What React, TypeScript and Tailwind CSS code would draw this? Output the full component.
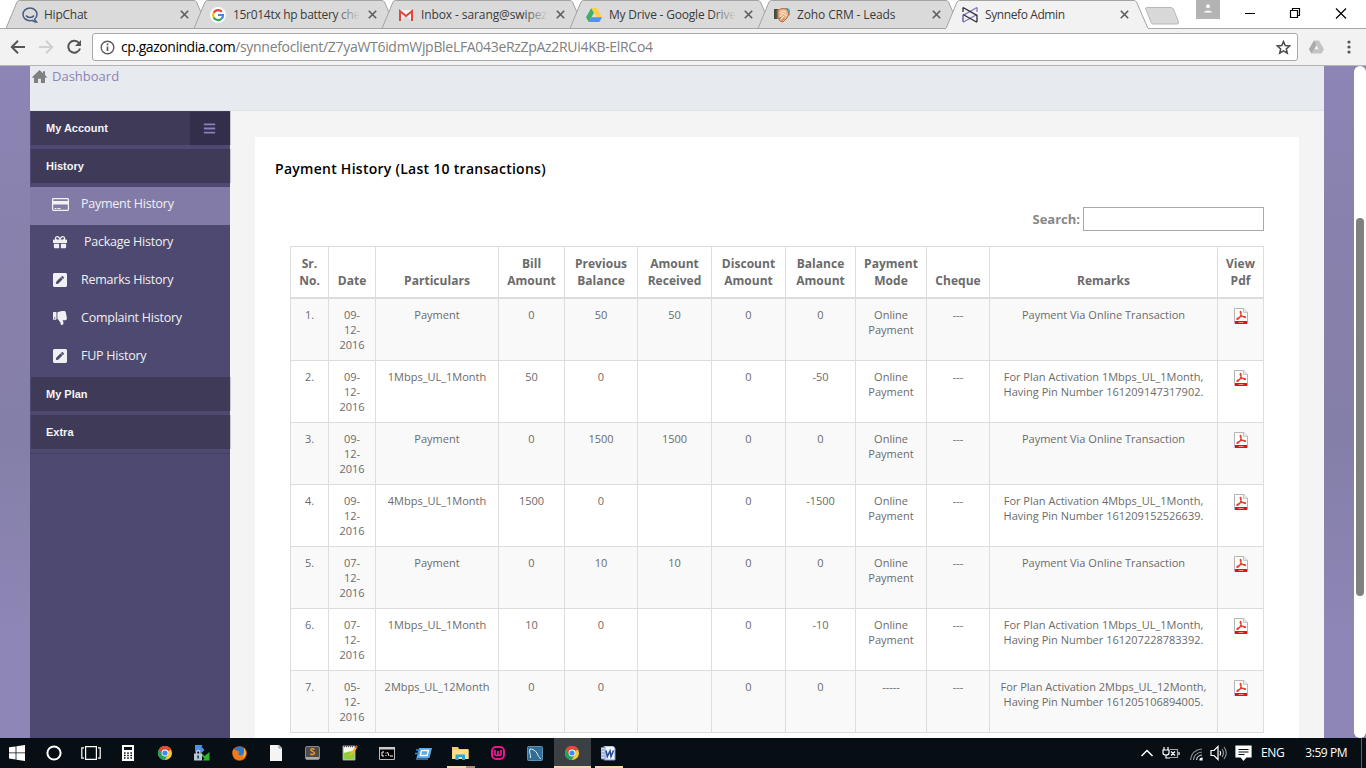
import type { ReactNode } from "react";
import { FaBars, FaGift, FaPenSquare, FaThumbsDown } from "react-icons/fa";

const SANS = "font-['Open_Sans','Noto_Sans',sans-serif]";

/* ---------- small drawings ---------- */

function ChromeIcon() {
  return (
    <svg width="14" height="14" viewBox="0 0 14 14">
      <circle cx="7" cy="7" r="7" fill="#fcc934" />
      <path d="M7 7 0.9 3.5A7 7 0 0 1 13.1 3.5Z" fill="#e04a3a" />
      <path d="M7 7 0.9 3.5A7 7 0 0 0 6.6 14L10 8.7Z" fill="#1da261" />
      <path d="M7 3.8H13.3A7 7 0 0 0 .9 3.5L4 8.2Z" fill="#e04a3a" />
      <circle cx="7" cy="7" r="3.4" fill="#fff" />
      <circle cx="7" cy="7" r="2.6" fill="#4285f4" />
    </svg>
  );
}

function HipChatIcon() {
  return (
    <svg width="16" height="16" viewBox="0 0 16 16" fill="none" stroke="#4a5a80" strokeWidth="1.5">
      <path d="M12.6 12.2C14 11 15 9.4 15 7.4 15 3.8 11.9 1 8 1S1 3.8 1 7.4s3.100 6.300 7 6.300c.8 0 1.600-.1 2.300-.3 1.200 1 2.600 1.700 4.100 1.500-.9-.8-1.500-1.700-1.800-2.700Z" />
      <path d="M4 8.500c1.700 2.600 6.300 2.600 8 0" />
    </svg>
  );
}

function GoogleIcon() {
  return (
    <svg width="16" height="16" viewBox="0 0 16 16">
      <circle cx="8" cy="8" r="8" fill="#fff" />
      <g fill="none" strokeWidth="2.200">
        <path d="M11.800 4.700A5 5 0 0 0 3.700 5.700" stroke="#ea4335" />
        <path d="M3.700 5.700a5 5 0 0 0 0 4.700" stroke="#fbbc05" />
        <path d="M3.700 10.400a5 5 0 0 0 7.800 1.400" stroke="#34a853" />
        <path d="M8 8h5c0 1.600-.5 2.900-1.500 3.800" stroke="#4285f4" />
      </g>
    </svg>
  );
}

function GmailIcon() {
  return (
    <svg width="16" height="14" viewBox="0 0 16 14" className="mt-px">
      <path d="M2 2h12v11H2z" fill="#f2f2f2" />
      <path d="M2 13 8 7l6 6Z" fill="#dcdcdc" />
      <path d="M2 13V3.200L8 8l6-4.800V13" fill="none" stroke="#dc4a3d" strokeWidth="2" />
    </svg>
  );
}

function DriveIcon() {
  return (
    <svg width="16" height="14" viewBox="0 0 16 14">
      <path d="M5.300 0 0 9.300 2.700 14 8 4.700Z" fill="#3fae6a" />
      <path d="M5.300 0h5.400L16 9.300h-5.300Z" fill="#ffcf4a" />
      <path d="M5.300 9.300H16L13.300 14H2.700Z" fill="#5390f0" />
    </svg>
  );
}

function ZohoIcon() {
  return (
    <svg width="16" height="16" viewBox="0 0 16 16">
      <path d="M0 2h4v10H0z" fill="#4a4a3e" />
      <path d="M2.800 3h1.700v9H2.800z" fill="#60a050" />
      <path d="M11 1h3l2 2v5l-3 1z" fill="#3bb9dc" />
      <path d="M4 3 8 1.500 13 2l2 5-2 4-4 4-3-1-2-3Z" fill="#e9b68c" stroke="#a8562e" strokeWidth=".8" />
      <path d="m6 10 3-4 4 3M6 6l3-2 3 1M7 12l3-3" fill="none" stroke="#fff0da" strokeWidth="1" />
      <path d="m5 12 2-2M8 13.500l2-2" stroke="#b45a28" />
    </svg>
  );
}

function SynnefoIcon() {
  return (
    <svg width="16" height="16" viewBox="0 0 16 16" fill="none" strokeWidth="1.300">
      <path d="M15 .5 1 8.500V15M15 .5V5M15 7.500 1 15.200" stroke="#8379bc" />
      <path d="M1 .5 15 8.500V15M1 .5V5M1 7.500l14 7.700" stroke="#2d2d3c" />
      <path d="M1 8.500V15" stroke="#8379bc" />
    </svg>
  );
}

function PdfIcon() {
  return (
    <svg width="14" height="16" viewBox="0 0 14 16">
      <path d="M.5.5h9.200l3.800 3.600v11.400H.5Z" fill="#fff" stroke="#b4b4b4" />
      <path d="M9.500.5v3.800h4" fill="#eee" stroke="#b4b4b4" strokeWidth=".8" />
      <path d="M6.300 3.400c1.300-.1.800 2.800.1 4.700C5.500 10 3.800 11.800 3 11.500c-1-.8 3-2.800 5.200-3.100 1.600-.2 3.600.1 3.400.9-.3.800-2.500-.2-3.800-1.600C6.600 6.400 5.700 4 6.300 3.400Z" fill="none" stroke="#e8402c" strokeWidth="1.100" />
      <path d="M1 13h12v3H1z" fill="#ee0d0d" />
      <path d="M4.500 14.500h5" stroke="#f98a8a" strokeWidth="1" />
    </svg>
  );
}

/* ---------- browser chrome ---------- */

interface Tab {
  title: string;
  icon: ReactNode;
  fade: boolean;
  text: string;
}

const tabs: Tab[] = [
  { title: "HipChat", icon: <HipChatIcon />, fade: false, text: "ml-[6px] w-[128px] tracking-[-0.25px]" },
  { title: "15r014tx hp battery check", icon: <GoogleIcon />, fade: true, text: "ml-[7px] w-[127px] tracking-[-0.3px]" },
  { title: "Inbox - sarang@swipez.in", icon: <GmailIcon />, fade: true, text: "ml-[7px] w-[127px] tracking-[-0.1px]" },
  { title: "My Drive - Google Drive", icon: <DriveIcon />, fade: true, text: "ml-[7px] w-[127px] tracking-[-0.2px]" },
  { title: "Zoho CRM - Leads", icon: <ZohoIcon />, fade: false, text: "ml-[7px] w-[127px] tracking-[-0.12px]" },
  { title: "Synnefo Admin", icon: <SynnefoIcon />, fade: false, text: "ml-[7px] w-[127px] tracking-[-0.4px]" },
];

function TabItem({ tab, active }: { tab: Tab; active: boolean }) {
  return (
    <div className="relative flex h-[29px] w-[188px] shrink-0 items-center pl-4">
      <svg className="absolute left-0 top-0" width="204" height="29" viewBox="0 0 204 29" overflow="visible">
        <path
          d="M0 28.500 11 2Q12 .5 13.500 .5H188Q189.500 .5 190.500 2L202 28.500"
          fill={active ? "#f2f2f2" : "#dadada"}
          stroke="#a3a3a3"
        />
        <path d="M0 28.500H202" stroke={active ? "#f2f2f2" : "#a3a3a3"} />
      </svg>
      <span className="relative flex h-4 w-4 items-center justify-center">{tab.icon}</span>
      <span className={"relative shrink-0 overflow-hidden whitespace-nowrap text-[12px] text-[#3a3a3a] " + tab.text}>
        {tab.title}
        {tab.fade && <span className="absolute right-0 top-0 h-full w-6 bg-gradient-to-r from-transparent to-[#dadada]" />}
      </span>
      <svg className="relative ml-[8px] shrink-0" width="9" height="9" viewBox="0 0 9 9" stroke="#5c5c5c" strokeWidth="1.600">
        <path d="m.8.800 7.400 7.400M8.200.800.800 8.200" />
      </svg>
    </div>
  );
}

function TabStrip() {
  return (
    <div className="flex h-[29px] border-b border-[#a9a9a9] bg-white pl-[6px]">
      {tabs.map((t, i) => (
        <TabItem key={t.title} tab={t} active={i === 5} />
      ))}
      <svg className="ml-[11px] mt-[7px] shrink-0" width="35" height="18" viewBox="0 0 35 18">
        <path d="M1.500 .5H26Q27.500 .5 28.500 2L33.500 15Q34 17 32 17H8Q6.500 17 6 15.500L.8 2Q.4 .5 1.500 .5Z" fill="#d8d8d8" stroke="#b8b8b8" />
      </svg>
      <div className="ml-[16px] flex h-[19px] w-[24px] shrink-0 justify-center bg-[#b3b3b3] pt-1">
        <svg width="10" height="10" viewBox="0 0 10 10" fill="#fff">
          <circle cx="5" cy="2.200" r="2" />
          <path d="M1 8.500C1 6 9 6 9 8.500Z" />
        </svg>
      </div>
      <svg className="ml-[24px] mt-[7px] shrink-0" width="104" height="13" viewBox="0 0 104 13" fill="none" stroke="#000">
        <path d="M1 6.500h10" />
        <path d="M46.500 3.500h7v7h-7zM48.500 3.500v-2h7v7h-2" strokeWidth="1.200" />
        <path d="m92 1.500 10 10M102 1.500l-10 10" strokeWidth="1.200" />
      </svg>
    </div>
  );
}

function Toolbar() {
  return (
    <div className="flex h-[37px] items-center border-b border-[#b5b5b5] bg-[#f2f2f2]">
      <svg className="ml-[10px]" width="74" height="16" viewBox="0 0 74 16" fill="none" strokeWidth="2">
        <path d="M15 8H2.500M8 1.800 1.800 8 8 14.200" stroke="#555" />
        <path d="M29 8h12.500M36 1.800 42.200 8 36 14.200" stroke="#d0d0d0" />
        <path d="M69 4A6 6 0 1 0 70 9.500" stroke="#555" />
        <path d="M71 1v6h-6Z" fill="#555" />
      </svg>
      <div className="ml-2 flex h-[28px] w-[1206px] items-center rounded-[3px] border border-[#a9a9a9] bg-white pl-[7px] pr-[6px]">
        <svg width="15" height="15" viewBox="0 0 15 15" fill="none" stroke="#5a5a5a">
          <circle cx="7.500" cy="7.500" r="6.300" strokeWidth="1.400" />
          <path d="M7.500 6.500v4.500M7.500 3.600v1.700" strokeWidth="1.700" />
        </svg>
        <span className="ml-[6px] whitespace-nowrap pb-px text-[14px] tracking-[-0.44px] text-[#808080]">
          <span className="text-black">cp.gazonindia.com</span>
          <span className="tracking-[-0.31px]">/synnefoclient/Z7yaWT6idmWjpBleLFA043eRzZpAz2RUi4KB-ElRCo4</span>
        </span>
        <svg className="ml-auto" width="15" height="15" viewBox="0 0 15 15" fill="none" stroke="#4a4a4a" strokeWidth="1.500">
          <path d="m7.500 1.600 1.700 4 4.400.4-3.300 2.900 1 4.300-3.800-2.300-3.800 2.300 1-4.300L1.400 6l4.400-.4Z" />
        </svg>
      </div>
      <svg className="ml-[11px]" width="15" height="14" viewBox="0 0 16 14">
        <path d="M5.300 0h5.400L16 9.300 13.300 14H2.700L0 9.300Z" fill="#c4c4c4" />
        <path d="M5.300 0 0 9.300 2.700 14 8 4.700Z" fill="#ababab" />
        <path d="m8 5 2.200 4.300H5.800Z" fill="#f2f2f2" />
      </svg>
      <svg className="ml-[23px]" width="4" height="14" viewBox="0 0 4 14" fill="#555">
        <circle cx="2" cy="2" r="1.600" />
        <circle cx="2" cy="7" r="1.600" />
        <circle cx="2" cy="12" r="1.600" />
      </svg>
    </div>
  );
}

/* ---------- sidebar ---------- */

function Section({ title, children }: { title: string; children?: ReactNode }) {
  return (
    <div className="mb-1 ml-px flex h-[34px] w-[200px] justify-between bg-[linear-gradient(90deg,#3f3a58_199px,#cbc9cf_199px)] font-['Liberation_Sans',Arial,sans-serif] text-[11px] font-bold leading-[34px] text-[#f4f4f4]">
      <span className="pl-[15px]">{title}</span>
      {children}
    </div>
  );
}

function CardIcon() {
  return (
    <svg width="17" height="13" viewBox="0 0 17 13">
      <rect x=".6" y=".6" width="15.800" height="11.800" rx=".8" fill="none" stroke="#f2f2f2" strokeWidth="1.200" />
      <path d="M1 3h15v3.500H1z" fill="#f2f2f2" />
      <path d="M2.500 10.500h2M5.500 10.500h3" stroke="#f2f2f2" />
    </svg>
  );
}

const items = [
  { label: "Payment History", icon: <CardIcon />, active: true, pad: "pl-[11px]" },
  { label: "Package History", icon: <FaGift size={14} />, active: false, pad: "pl-[14px]" },
  { label: "Remarks History", icon: <FaPenSquare size={16} />, active: false, pad: "pl-[11px]" },
  { label: "Complaint History", icon: <FaThumbsDown size={14} />, active: false, pad: "pl-[11px]" },
  { label: "FUP History", icon: <FaPenSquare size={16} />, active: false, pad: "pl-[11px]" },
];

function Sidebar() {
  return (
    <aside className="w-[200px] shrink-0 bg-[#4e4970]">
      <Section title="My Account">
        <span className="mr-px mt-px flex h-[33px] w-[40px] items-center justify-center bg-[#332e49] pr-px">
          <FaBars size={13} color="#8a80ba" />
        </span>
      </Section>
      <Section title="History" />
      <nav>
        {items.map(({ label, icon, active, pad }) => (
          <div
            key={label}
            className={"flex h-[38px] items-center pb-[4px] pl-[20px] text-[12.5px] text-[#f0f0f2] " + (active ? "bg-[#827ba8]" : "")}
          >
            <span className="flex w-[20px] justify-center">{icon}</span>
            <span className={"whitespace-nowrap tracking-[-0.24px] " + pad}>{label}</span>
          </div>
        ))}
      </nav>
      <Section title="My Plan" />
      <Section title="Extra" />
      <div className="border-t border-[#443f62]" />
    </aside>
  );
}

/* ---------- payment table ---------- */

const cols = [
  ["Sr. No.", "w-[38px]"],
  ["Date", "w-[47px]"],
  ["Particulars", "w-[123px]"],
  ["Bill Amount", "w-[66px]"],
  ["Previous Balance", "w-[73px]"],
  ["Amount Received", "w-[74px]"],
  ["Discount Amount", "w-[74px]"],
  ["Balance Amount", "w-[70px]"],
  ["Payment Mode", "w-[71px]"],
  ["Cheque", "w-[63px]"],
  ["Remarks", "w-[228px]"],
  ["View Pdf", "w-[46px]"],
];

const via = "Payment Via Online Transaction";
const plan = (p: string, pin: string) => "For Plan Activation " + p + ",\nHaving Pin Number " + pin + ".";

const rows = [
  ["1.", "09-\n12-\n2016", "Payment", "0", "50", "50", "0", "0", "Online\nPayment", "---", via],
  ["2.", "09-\n12-\n2016", "1Mbps_UL_1Month", "50", "0", "", "0", "-50", "Online\nPayment", "---", plan("1Mbps_UL_1Month", "161209147317902")],
  ["3.", "09-\n12-\n2016", "Payment", "0", "1500", "1500", "0", "0", "Online\nPayment", "---", via],
  ["4.", "09-\n12-\n2016", "4Mbps_UL_1Month", "1500", "0", "", "0", "-1500", "Online\nPayment", "---", plan("4Mbps_UL_1Month", "161209152526639")],
  ["5.", "07-\n12-\n2016", "Payment", "0", "10", "10", "0", "0", "Online\nPayment", "---", via],
  ["6.", "07-\n12-\n2016", "1Mbps_UL_1Month", "10", "0", "", "0", "-10", "Online\nPayment", "---", plan("1Mbps_UL_1Month", "161207228783392")],
  ["7.", "05-\n12-\n2016", "2Mbps_UL_12Month", "0", "0", "", "0", "0", "-----", "---", plan("2Mbps_UL_12Month", "161205106894005")],
];

function PaymentTable() {
  return (
    <table className="w-[974px] table-fixed border-separate border-spacing-0 border-r border-t border-[#dddddd] text-center">
      <colgroup>
        {cols.map(([name, w]) => (
          <col key={name} className={w} />
        ))}
      </colgroup>
      <thead>
        <tr className="h-[52px]">
          {cols.map(([name]) => (
            <th key={name} className="border-b-2 border-l border-[#dddddd] px-1 pb-[8px] align-bottom text-[12px] font-bold leading-[17px] tracking-[0.03px] text-[#6b6b6b]">
              {name}
            </th>
          ))}
        </tr>
      </thead>
      <tbody>
        {rows.map((r, i) => (
          <tr key={r[0]} className={"h-[62px] " + (i % 2 === 0 ? "bg-[#f9f9f9]" : "bg-white")}>
            {r.map((c, j) => (
              <td key={j} className="whitespace-pre border-b border-l border-[#dddddd] p-0 pt-[8px] align-top text-[11px] leading-[15px] text-[#6b6b6b]">
                {c}
              </td>
            ))}
            <td className="border-b border-l border-[#dddddd] p-0 pt-[9px] align-top">
              <span className="flex justify-center">
                <PdfIcon />
              </span>
            </td>
          </tr>
        ))}
      </tbody>
    </table>
  );
}

function Page() {
  return (
    <div className="flex h-[672px] overflow-hidden bg-[linear-gradient(180deg,#8d85b5_0%,#8881ad_25%,#847fa9_55%,#8e86b6_85%)]">
      <div className="ml-[30px] flex w-[1294px] flex-col bg-[#f4f4f4]">
        <header className="flex h-[45px] shrink-0 gap-[5px] border-b border-[#dfe4e9] bg-[#e7eaef] pl-[2px] text-[13px] leading-[20px] text-[#8c83b5]">
          <svg className="mt-[4px]" width="15" height="13" viewBox="0 0 15 13" fill="#808080">
            <path d="M7.500 0 11 3.200V1.200h2v3.900L15 7.200l-.6.600H13V13H8.900V8.800H6.100V13H2V7.800H.6L0 7.200Z" />
          </svg>
          <span>Dashboard</span>
        </header>
        <div className="flex flex-1">
          <Sidebar />
          <main className="ml-[25px] mt-[26px] w-[1044px] bg-white pl-[20px] pt-[22px]">
            <h1 className="text-[14px] font-semibold leading-[20px] tracking-[0.27px] text-black">Payment History (Last 10 transactions)</h1>
            <div className="mb-[15px] mt-[28px] flex h-[24px] items-center justify-end pr-[35px] text-[13px] font-bold text-[#888]">
              <label className="mr-[3px] pt-[2px]">Search:</label>
              <input className="h-[24px] w-[181px] border border-[#a9a9a9] bg-white" />
            </div>
            <div className="h-[491px] overflow-hidden pl-[15px]">
              <PaymentTable />
              <p className="pl-[5px] text-[12.5px] leading-[20px] text-[#888]">Showing 1 to 7 of 7 entries</p>
            </div>
          </main>
        </div>
      </div>
      <div className="ml-auto flex w-[12px] flex-col rounded-full bg-white pt-[152px]">
        <span className="ml-[2px] h-[378px] w-[8px] rounded-full bg-[#808080]" />
      </div>
    </div>
  );
}

/* ---------- taskbar ---------- */

const pinned: ReactNode[] = [
  <svg width="16" height="16" viewBox="0 0 16 16" fill="#fff"><path d="M0 2.300 6.600 1.400v6.100H0zM7.400 1.300 16 0v7.500H7.400zM0 8.300h6.600v6.200L0 13.600zM7.400 8.300H16V16l-8.600-1.300z" /></svg>,
  <svg width="16" height="16" viewBox="0 0 16 16" fill="none" stroke="#fff" strokeWidth="2"><circle cx="8" cy="8" r="6.600" /></svg>,
  <svg width="20" height="16" viewBox="0 0 20 16" fill="none" stroke="#fff" strokeWidth="1.200"><path d="M4.600 1.600h10.800v12.800H4.600zM3 2.800H.8v10.400H3M17 2.800h2.200v10.400H17" /></svg>,
  <svg width="12" height="16" viewBox="0 0 12 16"><path d="M0 0h12v16H0z" fill="#fff" /><path d="M2 2h8v3H2z" fill="#0a1116" /><path d="M2 8h8M2 10.500h8M2 13h8" stroke="#0a1116" strokeWidth="1.400" strokeDasharray="1.600 1.600" /></svg>,
  <ChromeIcon />,
  <svg width="16" height="16" viewBox="0 0 16 16"><path d="M1 0h7.500l-1 2 3 3-3 3-3-3-3.500 2z" fill="#4b93e8" /><path d="m7.500 8 3 3 5-4v8.500H8.500l2-2-3-3z" fill="#2fb52f" /><path d="M2.500 9V7q1.700-3 3.400 0v2" fill="none" stroke="#ccd3da" strokeWidth="1.400" /><path d="M0 8.500h8V15.500H0z" fill="#b9c6d8" /><path d="M3.300 10.500h1.600v3H3.300z" fill="#243858" /></svg>,
  <svg width="15" height="15" viewBox="0 0 15 15"><circle cx="7.500" cy="7.500" r="7.300" fill="#e35b16" /><circle cx="7.500" cy="5.500" r="5" fill="#2a76c9" /><path d="M1 3.500C3 3 4 5 6.500 5 8 6 6.500 7 6 8c2 2.500 5 1.500 6-2 3 3 0 8-4.500 8C2 14 0 9 1 3.500Z" fill="#f07c18" /><path d="M12 2c3 4 2 8-1 10 2-4 1-6 1-10Z" fill="#fbc638" /></svg>,
  <svg width="12" height="16" viewBox="0 0 12 16"><path d="M0 0h9l3 3v13H0z" fill="#f4f4f4" /><path d="M9 0v3h3" fill="none" stroke="#888" /></svg>,
  <svg width="15" height="14" viewBox="0 0 15 14"><rect x=".5" y=".5" width="14" height="13" rx="1.500" fill="#4c4c4c" stroke="#888" /><path d="M1 12h13" stroke="#aaa" strokeWidth="2" /><path d="M9.500 3.200C8 2.500 5.800 2.700 5.800 4S9.700 5.500 9.500 7.200C9.300 8.700 7 8.700 5.300 8" fill="none" stroke="#f59324" strokeWidth="1.500" /></svg>,
  <svg width="16" height="16" viewBox="0 0 16 16"><path d="M1 1h12v14H1z" fill="#f8f8ee" stroke="#999" /><path d="M1.500 8q6-2 11-2v8.500h-11z" fill="#8fce38" /><path d="M2 1.500h10" stroke="#555" strokeWidth="1.600" strokeDasharray="1 1" /><path d="m7.500 11.500.5-2.500 5-7 2 1-5.500 7.500z" fill="#f2b52c" /><path d="m13 2 1-2 2 1.500-1 1.500z" fill="#d44c3a" /></svg>,
  <svg width="16" height="13" viewBox="0 0 16 13"><path d="M.5.500h15v12H.5z" fill="#000" stroke="#bbb" /><path d="M0 0h16v2.500H0z" fill="#ccc" /><path d="M5 5H3v4h2M7 5.500v1M7 8v1M8.500 5l1.500 4M11 9h3" fill="none" stroke="#fff" /></svg>,
  <svg width="17" height="13" viewBox="0 0 17 13"><path d="M4 1h13l-2.500 10H1.500z" fill="#58aae8" /><path d="M6.500 3.500h7l-1.400 5H5.300z" fill="none" stroke="#fff" strokeWidth="1.300" /><path d="M1 3h4M0 6.500h4M1 12h12" stroke="#3d86cf" strokeWidth="1.500" /></svg>,
  <svg width="17" height="15" viewBox="0 0 17 15"><path d="M0 1h6l1 2h9.500v10H0z" fill="#f5cf60" /><path d="M1 4h15.500v9H0z" fill="#fbe089" /><path d="M3.500 14V8.500H13V14h-3v-3H6.500v3z" fill="#27a4e2" /></svg>,
  <svg width="14" height="14" viewBox="0 0 14 14"><rect x="1" y="1" width="12" height="12" rx="4" fill="none" stroke="#e9168c" strokeWidth="2" /><path d="M4 4v4.500Q5.500 10.500 7 8.500V5v3.500Q8.500 10.500 10 8.500V4" fill="none" stroke="#e9168c" strokeWidth="1.800" /></svg>,
  <svg width="16" height="15" viewBox="0 0 16 15"><rect x=".5" y=".5" width="15" height="14" rx="1" fill="#2f6e96" stroke="#5d90b0" /><path d="M3.500 12c.5-3-2-7-.5-9 4 0 7 3 8 6.500 0 1 2 1.500 2.500 3.500" fill="none" stroke="#e4eef4" strokeWidth="1" /></svg>,
  <ChromeIcon />,
  <svg width="15" height="15" viewBox="0 0 15 15"><path d="M3 0h9l2 2v12H3z" fill="#f2f6fb" stroke="#7a95c4" /><path d="M0 1.500h4v11.500H0z" fill="#dfe8f5" stroke="#5d7cb8" strokeWidth=".8" /><path d="m5 4.500 1.300 6L9 5l1 5.500 2.500-6" fill="none" stroke="#2b4a95" strokeWidth="1.600" /><path d="M1 4h2M1 7h2M1 10h2" stroke="#5d7cb8" /></svg>,
];

function Taskbar() {
  return (
    <footer className="flex h-[30px] items-center bg-[#070f14] text-white">
      {pinned.map((icon, i) => (
        <div
          key={i}
          className={
            "relative flex h-[30px] w-[36.95px] shrink-0 justify-center pr-[2px] pt-[7px] " +
            (i === 15 ? "border-b-2 border-[#fcd5aa] bg-[#3a4044]" : "")
          }
        >
          <span className="flex h-4 items-center">{icon}</span>
          {i === 12 && (
            <span className="absolute bottom-0 left-1 h-[2px] w-[28px] bg-[linear-gradient(90deg,#fcd5aa_19px,#a98f73_19px)]" />
          )}
          {i === 16 && <span className="absolute bottom-0 left-1 h-[2px] w-[28px] bg-[#fcd5aa]" />}
        </div>
      ))}
      <svg className="ml-auto shrink-0" width="112" height="18" viewBox="0 0 112 18" fill="none" stroke="#fff" strokeWidth="1.200">
        <path d="m1.500 12 5.500-5.500 5.500 5.500" strokeWidth="1.500" />
        <path d="M24 3v3M28 3v3M23 6h6v3q0 2-3 2t-3-2zM26 11v3h4" />
        <path d="M30 5.500h7.500v8H30" stroke="#a0a4a6" />
        <path d="m31 7.500 4 4M35 7.500l-4 4M39 8v3" />
        <path d="M50.500 16Q51.500 6 62 5M53.500 16q.5-7 8.500-8" stroke="#8d9295" />
        <path d="M56.500 16q.5-4.500 5.500-5" stroke="#c4c7c9" />
        <path d="M60 16q0-2 2-2v2z" fill="#fff" />
        <path d="M71 6.500h3l4-4v13l-4-4h-3zM80 7q1.500 2 0 4.500" />
        <path d="M82 5q3 4 0 8M84 3q4.500 6 0 12" stroke="#8d9295" />
        <path d="M96 2h15v11h-5l-2.500 3-2.500-3h-5z" fill="#fff" stroke="#fff" />
        <path d="M98.500 5.500h10M98.500 8h10M98.500 10.500h6" stroke="#070f14" />
      </svg>
      <span className="ml-[9px] text-[12px] tracking-[-0.4px]">ENG</span>
      <span className="ml-[21px] text-[12px] tracking-[-0.45px]">3:59 PM</span>
      <span className="ml-[14px] h-full w-[5px] border-l border-[#596066]" />
    </footer>
  );
}

export default function App() {
  return (
    <div className={"h-[768px] w-[1366px] overflow-hidden " + SANS}>
      <TabStrip />
      <Toolbar />
      <Page />
      <Taskbar />
    </div>
  );
}
